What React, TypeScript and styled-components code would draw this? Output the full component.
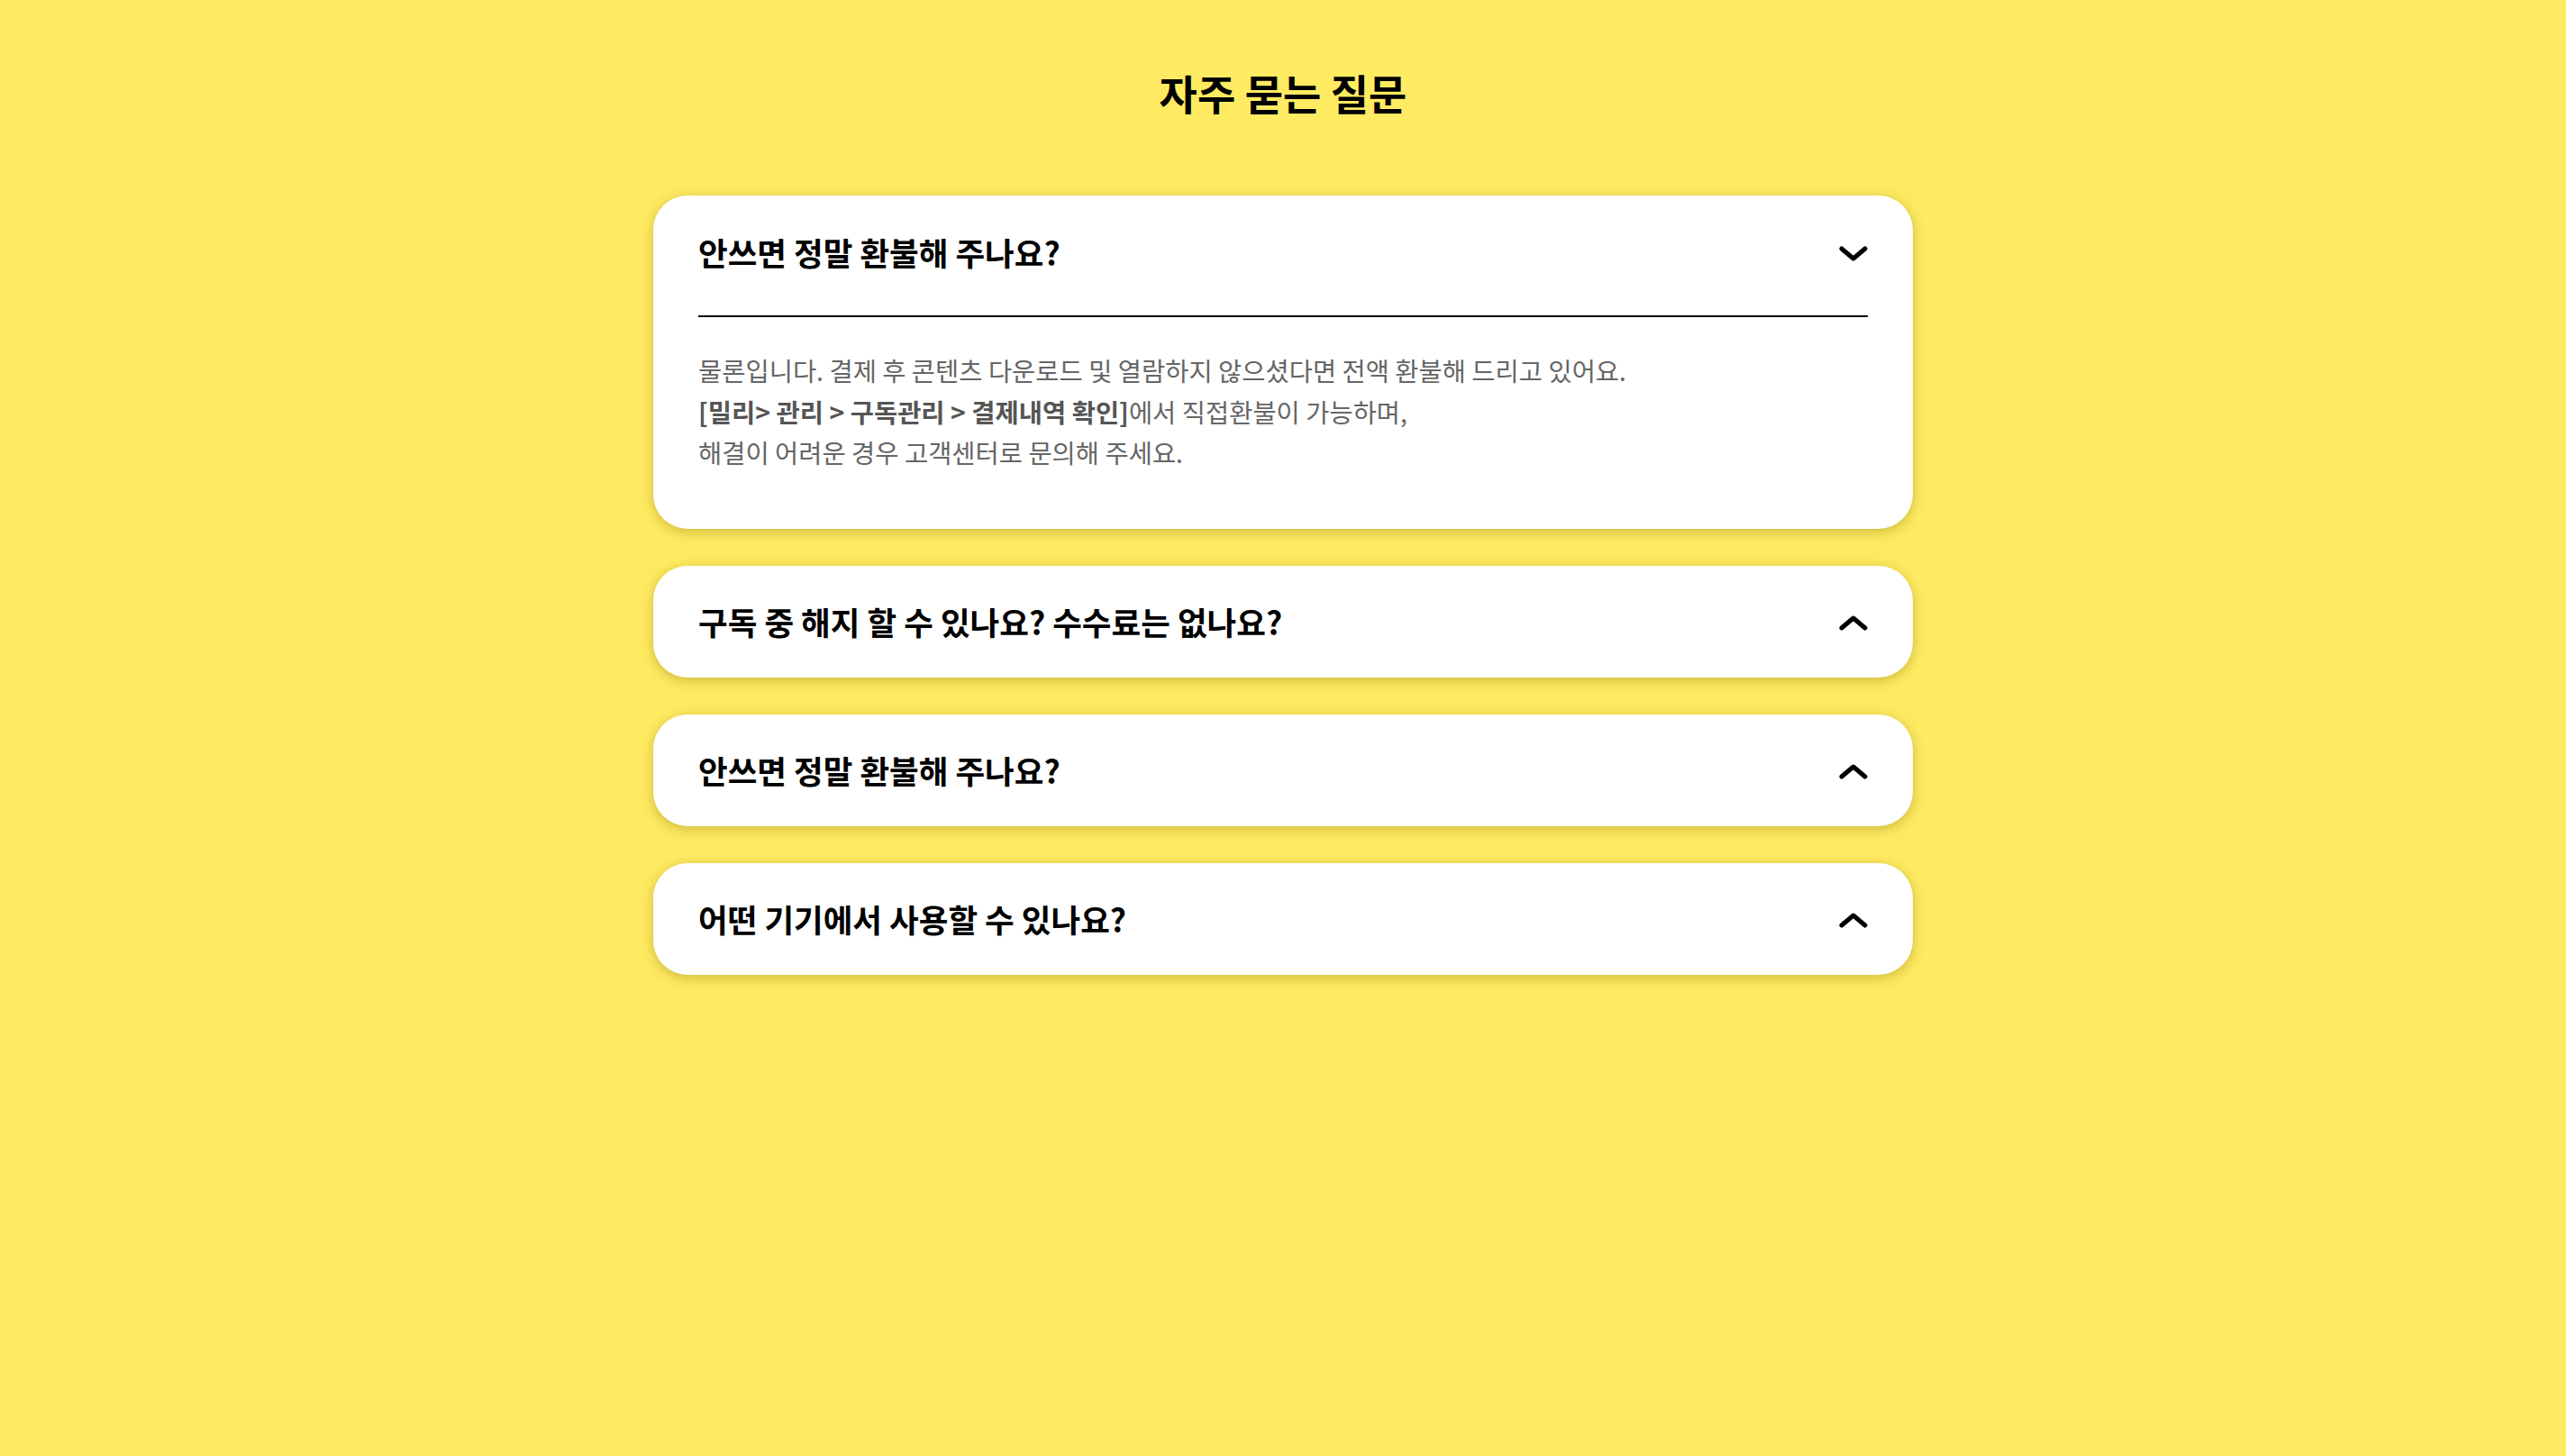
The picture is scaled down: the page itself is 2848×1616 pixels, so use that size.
import React, { useState } from "react";
import styled, { createGlobalStyle } from "styled-components";

const GlobalStyle = createGlobalStyle`
    html, body {
        margin: 0;
        padding: 0;
        background-color: #ffeb61;
    }
    body {
        font-family: "Noto Sans CJK KR", "Noto Sans", sans-serif;
        min-height: 100vh;
    }
`

const StyledPage = styled.div`
    min-height: 100vh;
    box-sizing: border-box;
    padding: 73px 0 120px;
    display: flex;
    flex-direction: column;
    align-items: center;
`

const Title = styled.h1`
    margin: 0 0 86px;
    font-size: 46px;
    line-height: 58px;
    font-weight: 700;
    color: #000;
`

const List = styled.div`
    width: 1398px;
    display: flex;
    flex-direction: column;
    gap: 41px;
`

const Card = styled.div`
    background-color: #fff;
    border-radius: 38px;
    padding: 42px 50px;
    box-shadow: 0 3px 14px rgba(120, 100, 0, 0.38);
`

const Question = styled.button<{ $open: boolean }>`
    all: unset;
    box-sizing: border-box;
    width: 100%;
    height: 40px;
    display: flex;
    align-items: center;
    justify-content: space-between;
    cursor: pointer;
    font-family: "Noto Sans CJK KR", "Noto Sans", sans-serif;
    font-size: 35.5px;
    font-weight: 700;
    color: #000;
    margin-bottom: ${(props) => (props.$open ? "51px" : "0")};
`

const Chevron = styled.svg<{ $open: boolean }>`
    width: 32px;
    height: 20px;
    flex-shrink: 0;
    margin-top: ${(props) => (props.$open ? "6px" : "2px")};
    transform: ${(props) => (props.$open ? "none" : "rotate(180deg)")};
`

const Answer = styled.div`
    border-top: 2px solid #000;
    padding: 36px 0 20px;
    font-size: 28.5px;
    line-height: 45.5px;
    color: #666;
    b {
        font-weight: 700;
        color: #555;
    }
`

const faqs = [
    {
        q: "안쓰면 정말 환불해 주나요?",
        a: (
            <>
                물론입니다. 결제 후 콘텐츠 다운로드 및 열람하지 않으셨다면 전액 환불해 드리고 있어요.
                <br />
                <b>[밀리&gt; 관리 &gt; 구독관리 &gt; 결제내역 확인]</b>에서 직접환불이 가능하며,
                <br />
                해결이 어려운 경우 고객센터로 문의해 주세요.
            </>
        ),
    },
    { q: "구독 중 해지 할 수 있나요? 수수료는 없나요?", a: null },
    { q: "안쓰면 정말 환불해 주나요?", a: null },
    { q: "어떤 기기에서 사용할 수 있나요?", a: null },
]

const FaqItem = (props: any) => {
    const [open, setOpen] = useState<boolean>(props.defaultOpen)

    return <Card>
        <Question $open={open} onClick={() => setOpen(!open)}>
            {props.q}
            <Chevron $open={open} viewBox="0 0 32 20">
                <path d="M3 4 L16 15 L29 4" fill="none" stroke="#000" strokeWidth="5" strokeLinecap="round" strokeLinejoin="round" />
            </Chevron>
        </Question>
        {open && props.a && <Answer>{props.a}</Answer>}
    </Card>
}

const App = () => {

    return <>
        <GlobalStyle />
        <StyledPage>
            <Title>자주 묻는 질문</Title>
            <List>
                {faqs.map((item, i) => (
                    <FaqItem key={i} q={item.q} a={item.a} defaultOpen={i === 0} />
                ))}
            </List>
        </StyledPage>
    </>
}

export default App
